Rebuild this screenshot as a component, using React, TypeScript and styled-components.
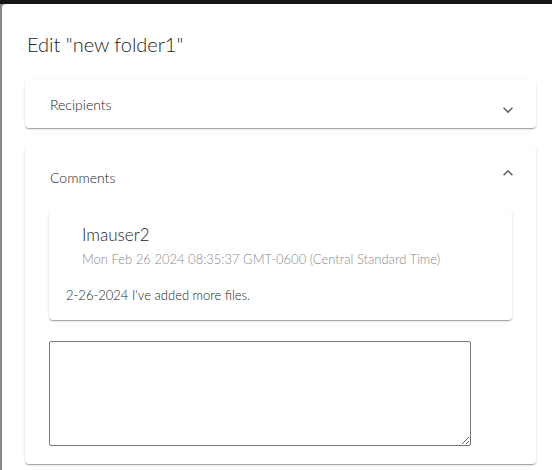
import React from "react";
import styled, { createGlobalStyle } from "styled-components";

const GlobalStyle = createGlobalStyle`
  html, body {
    margin: 0;
    padding: 0;
    background: #888;
  }
  body {
    font-family: Lato, "Liberation Sans", sans-serif;
    color: #2a2a2a;
  }
`;

const Backdrop = styled.div`
  width: 552px;
  height: 470px;
  overflow: hidden;
  box-sizing: border-box;
  background: #878787;
  border-top: 4px solid #151515;
  padding-left: 2px;
`;

const Dialog = styled.div`
  width: 560px;
  min-height: 500px;
  background: #fff;
  border-top-left-radius: 4px;
`;

const Title = styled.h2`
  margin: 0;
  padding: 24px 24px 20px 25px;
  font-size: 20px;
  line-height: 32px;
  font-weight: 300;
  color: #222;
`;

const Content = styled.div`
  padding: 0 23px;
  display: flex;
  flex-direction: column;
  gap: 17px;
  width: 511px;
`;

const Panel = styled.section`
  background: #fff;
  border-radius: 4px;
  box-shadow: 0 2px 1px -1px rgba(0, 0, 0, 0.2), 0 1px 1px 0 rgba(0, 0, 0, 0.14),
    0 1px 3px 0 rgba(0, 0, 0, 0.12);
`;

const Summary = styled.div<{ $expanded?: boolean }>`
  height: ${(p) => (p.$expanded ? 64 : 48)}px;
  display: flex;
  align-items: center;
  justify-content: space-between;
  padding: 0 18px 0 25px;
  font-size: 14px;
  font-weight: 300;
  color: #222;
`;

const Chevron = styled.svg<{ $up?: boolean }>`
  width: 20px;
  height: 20px;
  fill: #666;
  margin-top: ${(p) => (p.$up ? -9 : 11)}px;
  transform: ${(p) => (p.$up ? "rotate(180deg)" : "none")};
`;

const Details = styled.div`
  padding: 0 24px 18px;
`;

const CommentCard = styled.div`
  width: 463px;
  box-sizing: border-box;
  border-radius: 4px;
  background: #fff;
  padding: 14px 16px 15px 17px;
  box-shadow: 0 2px 1px -1px rgba(0, 0, 0, 0.2), 0 1px 1px 0 rgba(0, 0, 0, 0.14),
    0 1px 3px 0 rgba(0, 0, 0, 0.12);
`;

const Author = styled.div`
  padding-left: 16px;
  font-size: 17px;
  line-height: 24px;
  font-weight: 300;
  color: #222;
`;

const Stamp = styled.div`
  padding-left: 16px;
  font-size: 13px;
  line-height: 24px;
  font-weight: 300;
  color: #8a8a8a;
`;

const Body = styled.p`
  margin: 14px 0 0;
  font-size: 13px;
  line-height: 20px;
  font-weight: 300;
  color: #222;
`;

const Reply = styled.textarea`
  display: block;
  margin-top: 21px;
  width: 422px;
  height: 105px;
  box-sizing: border-box;
  border: 1px solid #767676;
  border-radius: 2px;
  font-family: inherit;
`;

function ExpandIcon({ up }: { up?: boolean }) {
  return (
    <Chevron $up={up} viewBox="0 0 24 24">
      <path d="M16.59 8.59 12 13.17 7.41 8.59 6 10l6 6 6-6z" />
    </Chevron>
  );
}

export default function App() {
  return (
    <>
      <GlobalStyle />
      <Backdrop>
        <Dialog>
          <Title>Edit "new folder1"</Title>
          <Content>
            <Panel>
              <Summary>
                Recipients
                <ExpandIcon />
              </Summary>
            </Panel>
            <Panel>
              <Summary $expanded>
                Comments
                <ExpandIcon up />
              </Summary>
              <Details>
                <CommentCard>
                  <Author>Imauser2</Author>
                  <Stamp>Mon Feb 26 2024 08:35:37 GMT-0600 (Central Standard Time)</Stamp>
                  <Body>2-26-2024 I've added more files.</Body>
                </CommentCard>
                <Reply />
              </Details>
            </Panel>
          </Content>
        </Dialog>
      </Backdrop>
    </>
  );
}
